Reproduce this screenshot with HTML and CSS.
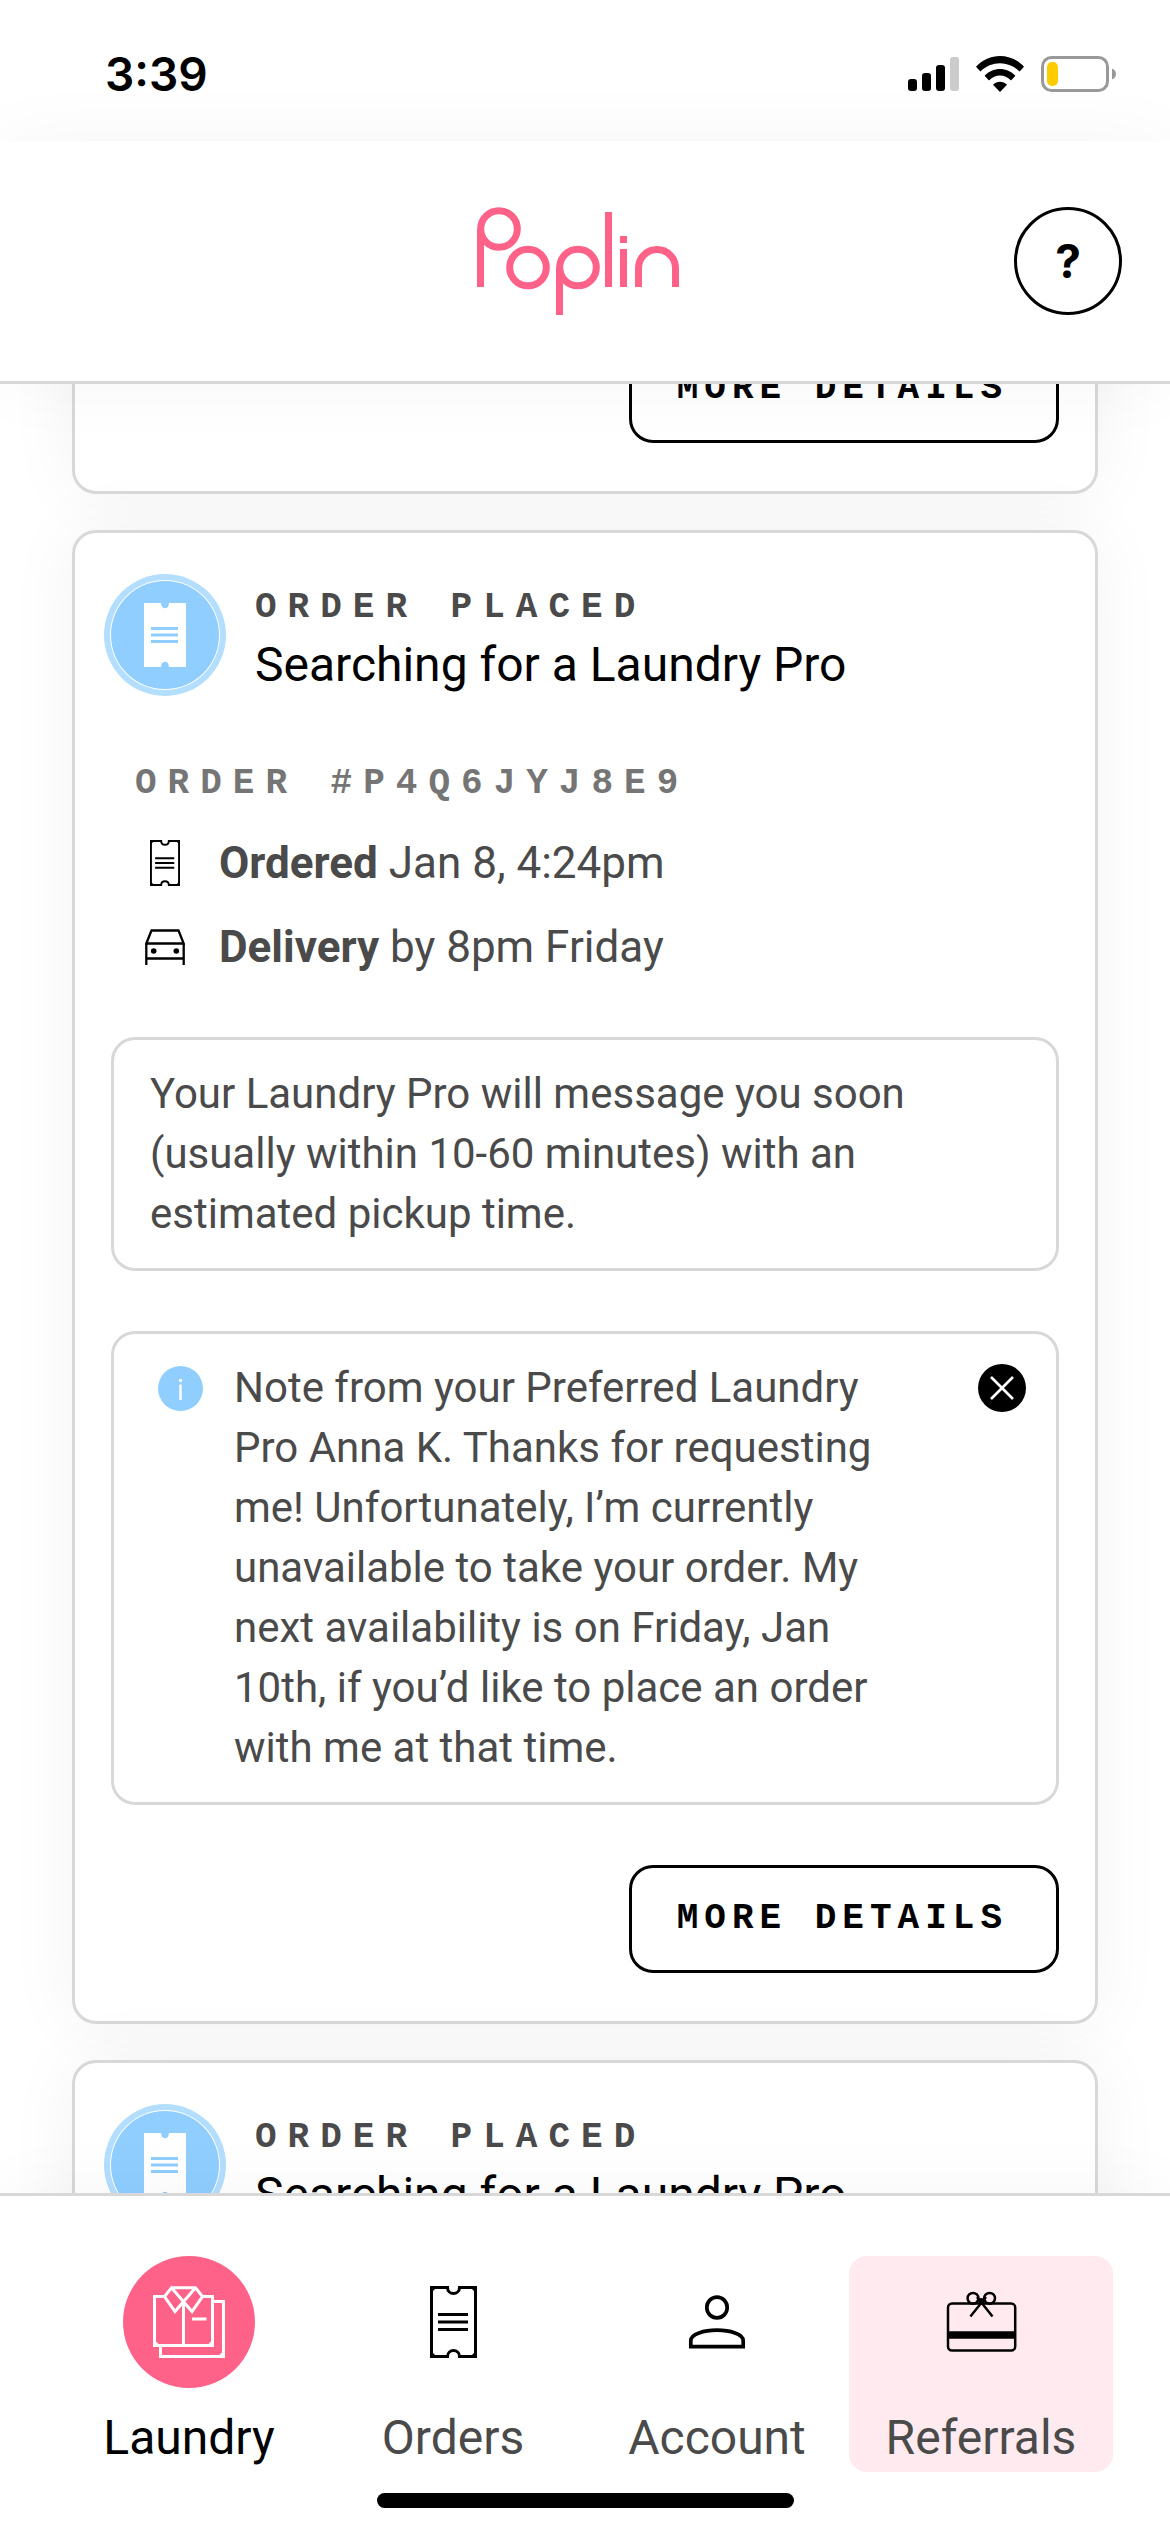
FILE: index.html
```html
<!DOCTYPE html>
<html lang="en">
<head>
  <meta charset="UTF-8">
  <meta name="viewport" content="width=device-width, initial-scale=1">
  <title>Poplin - Laundry</title>
  <link rel="stylesheet" href="styles.css">
</head>
<body>

  <!-- ICONS -->
  <svg class="sprite" aria-hidden="true">
    <symbol id="ticket" viewBox="0 0 47 72">
      <path d="M1.5 1.5H17.5C17.5 9.5 29.5 9.5 29.5 1.5H45.5V70.5H29.5C29.5 62.5 17.5 62.5 17.5 70.5H1.5Z" fill="none" stroke="currentColor" stroke-width="3"/>
      <path d="M1.5 6V1.5H6ZM41 1.5H45.5V6ZM1.5 66V70.5H6ZM41 70.5H45.5V66Z" stroke="currentColor" stroke-width="1" fill="currentColor"/>
      <path d="M8 28.5H38M8 36H38M8 43.5H38" stroke="currentColor" stroke-width="3"/>
    </symbol>
    <symbol id="ticket-solid" viewBox="0 0 42 64">
      <path d="M0 0H17C17 7 25 7 25 0H42V64H25C25 57 17 57 17 64H0Z" fill="#fff"/>
      <path d="M7 25.5H34M7 32H34M7 38.5H34" stroke="#8fceff" stroke-width="3"/>
    </symbol>
  </svg>

  <!-- STATUS BAR -->
  <div class="status-bar">
    <span class="time">3:39</span>
    <div class="status-icons">
      <svg width="51" height="36" viewBox="0 0 51 36" aria-hidden="true">
        <rect x="0" y="23" width="9" height="12" rx="3"/>
        <rect x="14" y="17" width="9" height="18" rx="3"/>
        <rect x="28" y="9" width="9" height="26" rx="3"/>
        <rect x="42" y="1" width="9" height="34" rx="3" fill="#ccc"/>
      </svg>
      <svg width="48" height="36" viewBox="0 0 48 36" aria-hidden="true">
        <path d="M0 10.8C13-3.6 35-3.6 48 10.8L43.6 15.6C32.5 4.5 15.5 4.5 4.4 15.6Z"/>
        <path d="M8.6 19.8C17 10.7 31 10.7 39.4 19.8L35 24.4C28.5 18 19.5 18 13 24.4Z"/>
        <path d="M17 28.8C21 24.7 27 24.7 31 28.8L24 36Z"/>
      </svg>
      <svg width="75" height="36" viewBox="0 0 75 36" aria-hidden="true">
        <rect x="1.5" y="1.5" width="65" height="33" rx="9" fill="none" stroke="#999" stroke-width="3"/>
        <rect x="6" y="6" width="11" height="24" rx="5" fill="#fc0"/>
        <path d="M71 12.5C76.3 14.5 76.3 21.5 71 23.5Z" fill="#999"/>
      </svg>
    </div>
  </div>

  <!-- HEADER -->
  <header class="header">
    <a href="#" class="logo" aria-label="Poplin">
      <svg width="202" height="108" viewBox="0 0 202 108" fill="none" stroke="#ff6289" stroke-width="7" aria-hidden="true">
        <circle cx="22" cy="22" r="18.3"/>
        <line x1="3.5" y1="22" x2="3.5" y2="80"/>
        <circle cx="51" cy="60.5" r="18.3"/>
        <circle cx="101" cy="60.5" r="18.3"/>
        <line x1="82.5" y1="60" x2="82.5" y2="108"/>
        <line x1="131.5" y1="5" x2="131.5" y2="80"/>
        <line x1="146.5" y1="29" x2="146.5" y2="36"/>
        <line x1="146.5" y1="42" x2="146.5" y2="80"/>
        <rect x="161.5" y="42.5" width="37" height="80" rx="18.5" clip-path="inset(-4px -4px 46px -4px)"/>
      </svg>
    </a>
    <button type="button" class="help-btn" aria-label="Help">?</button>
  </header>

  <!-- ORDERS -->
  <main class="orders">
    <article class="card card-prev">
      <div class="card-actions">
        <button type="button" class="details-btn">MORE DETAILS</button>
      </div>
    </article>

    <article class="card">
      <div class="card-head">
        <span class="badge"><svg width="42" height="64" aria-hidden="true"><use href="#ticket-solid"/></svg></span>
        <div class="card-title">
          <p class="label">ORDER PLACED</p>
          <h2>Searching for a Laundry Pro</h2>
        </div>
      </div>

      <div class="info">
        <p class="label label-light">ORDER #P4Q6JYJ8E9</p>
        <ul>
          <li>
            <span class="slot"><svg width="30" height="46" aria-hidden="true"><use href="#ticket"/></svg></span>
            <span><b>Ordered</b> Jan 8, 4:24pm</span>
          </li>
          <li>
            <span class="slot">
              <svg width="40" height="36" viewBox="0 0 40 36" fill="none" stroke="#000" stroke-width="2.3" aria-hidden="true">
                <path d="M1.3 14.5L6.5 1.5H33.5L38.7 14.5ZM1.3 14V36M38.7 14V36M1.3 29.5H38.7"/>
                <circle cx="8.7" cy="22" r="2.8" fill="#000" stroke="none"/>
                <circle cx="31.3" cy="22" r="2.8" fill="#000" stroke="none"/>
              </svg>
            </span>
            <span><b>Delivery</b> by 8pm Friday</span>
          </li>
        </ul>
      </div>

      <p class="notice">Your Laundry Pro will message you soon (usually within 10-60 minutes) with an estimated pickup time.</p>

      <div class="notice notice-pro">
        <span class="slot">
          <svg width="45" height="45" viewBox="0 0 45 45" aria-hidden="true">
            <circle cx="22.5" cy="22.5" r="22.5" fill="#8fceff"/>
            <circle cx="22.5" cy="14.5" r="1.7" fill="#fff"/>
            <path d="M22.5 18.5V34" stroke="#fff" stroke-width="2.4"/>
          </svg>
        </span>
        <p>Note from your Preferred Laundry Pro Anna K. Thanks for requesting me! Unfortunately, I’m currently unavailable to take your order. My next availability is on Friday, Jan 10th, if you’d like to place an order with me at that time.</p>
        <button type="button" class="close-btn" aria-label="Dismiss note">
          <svg width="48" height="48" viewBox="0 0 48 48" aria-hidden="true">
            <circle cx="24" cy="24" r="24"/>
            <path d="M13 13L35 35M35 13L13 35" stroke="#fff" stroke-width="2.6"/>
          </svg>
        </button>
      </div>

      <div class="card-actions">
        <button type="button" class="details-btn">MORE DETAILS</button>
      </div>
    </article>

    <article class="card">
      <div class="card-head">
        <span class="badge"><svg width="42" height="64" aria-hidden="true"><use href="#ticket-solid"/></svg></span>
        <div class="card-title">
          <p class="label">ORDER PLACED</p>
          <h2>Searching for a Laundry Pro</h2>
        </div>
      </div>
    </article>
  </main>

  <!-- TAB BAR -->
  <footer class="tab-bar">
    <nav>
      <a href="#" class="tab active">
        <svg viewBox="0 0 132 132" fill="none" stroke="#fff" stroke-width="3" aria-hidden="true">
          <circle cx="66" cy="66" r="66" fill="#ff6289" stroke="none"/>
          <path d="M42 40.5H31.5V89.5H89.5V40.5H79"/>
          <path d="M48.5 31.8H72.5L79.5 40.5L69 55.5L48.5 31.8L41.5 40.5L52 55.5L72.5 31.8M60.5 46V89.5"/>
          <path d="M69 63H83.5M90 45.5H100.5V100.5H37.5V90"/>
          <path d="M31.5 86V89.5H35ZM86 89.5H89.5V86ZM97 100.5H100.5V97Z" fill="#fff"/>
        </svg>
        <span>Laundry</span>
      </a>
      <a href="#" class="tab">
        <svg viewBox="0 0 132 132" aria-hidden="true"><use href="#ticket" x="43" y="30" width="47" height="72"/></svg>
        <span>Orders</span>
      </a>
      <a href="#" class="tab">
        <svg viewBox="0 0 132 132" fill="none" stroke="#000" stroke-width="3.7" aria-hidden="true">
          <ellipse cx="66" cy="51.5" rx="10.2" ry="10.4"/>
          <path d="M39.8 90.7V84.5C39.8 78 53 74.2 66 74.2S92.2 78 92.2 84.5V90.7Z"/>
        </svg>
        <span>Account</span>
      </a>
      <a href="#" class="tab tab-pink">
        <svg viewBox="0 0 132 132" fill="none" stroke="#000" stroke-width="2.5" aria-hidden="true">
          <rect x="33" y="47.5" width="67.2" height="47" rx="4"/>
          <path d="M33 79H100" stroke-width="7.5"/>
          <circle cx="58" cy="42.3" r="5.4"/>
          <circle cx="74.6" cy="42.3" r="5.4"/>
          <path d="M62 41L77.5 60.5M71 41L55.4 60.5"/>
          <circle cx="66.4" cy="45" r="3" fill="#000" stroke="none"/>
        </svg>
        <span>Referrals</span>
      </a>
    </nav>
    <div class="home-bar"></div>
  </footer>

</body>
</html>
```

FILE: styles.css
```css
/* RESET + BASE */
* { margin: 0; padding: 0; box-sizing: border-box; }
body {
  font-family: Roboto, 'Liberation Sans', sans-serif;
  font-size: 42px;
  line-height: 60px;
  background: #fff;
  color: #4a4a4a;
  height: 100vh;
  display: flex;
  flex-direction: column;
  overflow: hidden;
}
a { text-decoration: none; color: inherit; }
button { font: inherit; background: none; border: none; color: #000; cursor: pointer; }
ul { list-style: none; }
svg { display: block; flex: none; }
.sprite { position: absolute; width: 0; height: 0; }

/* STATUS BAR */
.status-bar {
  display: flex;
  justify-content: space-between;
  align-items: center;
  height: 141px;
  padding: 6px 54px 0 105px;
  flex: none;
}
.time {
  font-family: Inter, sans-serif;
  font-size: 46px;
  font-weight: 600;
  color: #000;
}
.status-icons { display: flex; gap: 17px; }

/* HEADER */
.header {
  position: relative;
  z-index: 2;
  flex: none;
  display: grid;
  grid-template-columns: 1fr auto 1fr;
  align-items: center;
  padding: 66px 48px;
  background: #fff;
  border-bottom: 3px solid #d8d8d8;
  box-shadow: 0 0 72px rgba(0, 0, 0, 0.04);
}
.logo { grid-column: 2; padding-right: 14px; }
.help-btn {
  justify-self: end;
  width: 108px;
  height: 108px;
  border: 3px solid #000;
  border-radius: 50%;
  font-family: Inter, sans-serif;
  font-size: 46px;
  font-weight: 700;
}

/* CARDS */
.orders {
  flex: 1;
  min-height: 0;
  overflow: hidden;
  padding: 0 72px;
  display: flex;
  flex-direction: column;
  gap: 36px;
}
.card {
  flex: none;
  background: #fff;
  border: 3px solid #d8d8d8;
  border-radius: 24px;
  padding: 48px 36px;
  box-shadow: 0 0 72px rgba(0, 0, 0, 0.05);
}
/* scrolled up under the header */
.card-prev { margin-top: -100px; }
.card-head { display: flex; gap: 36px; }
.badge {
  display: flex;
  justify-content: center;
  align-items: center;
  width: 108px;
  height: 108px;
  border-radius: 50%;
  background: #8fceff;
  box-shadow: 0 0 0 1px #fff, 0 0 0 7px #b3deff;
}
.card-title { padding-top: 3px; }
.card-title h2 {
  font-size: 48px;
  font-weight: 400;
  line-height: 66px;
  color: #000;
}
.label {
  font-family: 'Liberation Mono', monospace;
  font-size: 36px;
  font-weight: bold;
  line-height: 48px;
  letter-spacing: 11px;
}
.label-light { color: #757575; }

.info { padding: 62px 24px 60px; }
.info ul {
  display: flex;
  flex-direction: column;
  gap: 24px;
  margin-top: 25px;
}
.info li { display: flex; gap: 24px; font-size: 44px; }
.slot {
  flex: none;
  display: flex;
  justify-content: center;
  align-items: center;
  width: 60px;
  height: 60px;
  color: #000;
}

.notice {
  border: 3px solid #d8d8d8;
  border-radius: 24px;
  padding: 24px 36px;
  margin-bottom: 60px;
}
.notice-pro {
  display: flex;
  align-items: flex-start;
  gap: 24px;
  padding-right: 30px;
}
.notice-pro p { flex: 1; padding-right: 66px; }
.close-btn { padding: 6px 0; }

.card-actions { display: flex; justify-content: flex-end; }
.details-btn {
  height: 108px;
  padding: 0 48px 0 45px;
  border: 3px solid #000;
  border-radius: 24px;
  font-family: 'Liberation Mono', monospace;
  font-size: 36px;
  font-weight: bold;
  letter-spacing: 6px;
}

/* TAB BAR */
.tab-bar {
  position: relative;
  z-index: 2;
  flex: none;
  background: #fff;
  border-top: 3px solid #d8d8d8;
  box-shadow: 0 0 72px rgba(0, 0, 0, 0.04);
  padding: 60px 57px 24px;
}
.tab-bar nav { display: grid; grid-template-columns: repeat(4, 1fr); }
.tab {
  display: flex;
  flex-direction: column;
  align-items: center;
  gap: 16px;
  border-radius: 18px;
  font-size: 48px;
  line-height: 68px;
}
.tab svg { width: 132px; height: 132px; color: #000; }
.tab.active { color: #000; }
.tab-pink { background: #ffebef; }
.home-bar {
  width: 417px;
  height: 15px;
  margin: 21px auto 0;
  border-radius: 8px;
  background: #000;
}
```
